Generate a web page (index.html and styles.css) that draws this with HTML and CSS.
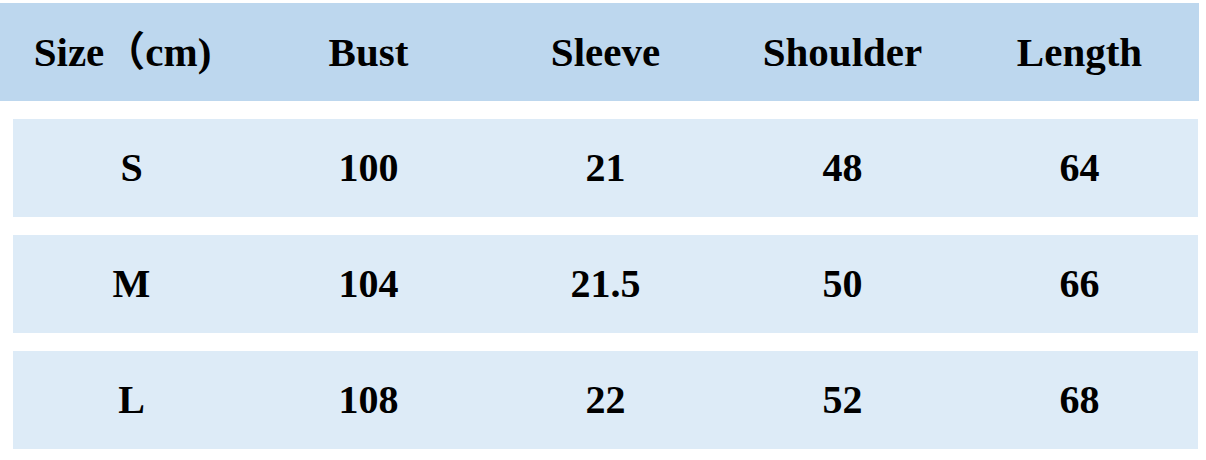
FILE: index.html
```html
<!DOCTYPE html>
<html>
<head>
<meta charset="utf-8">
<link rel="stylesheet" href="styles.css">
</head>
<body>
<div class="chart">
  <div class="head">
    <div class="cell first">Size（cm)</div>
    <div class="cell">Bust</div>
    <div class="cell">Sleeve</div>
    <div class="cell">Shoulder</div>
    <div class="cell">Length</div>
  </div>
  <div class="row">
    <div class="cell">S</div>
    <div class="cell">100</div>
    <div class="cell">21</div>
    <div class="cell">48</div>
    <div class="cell">64</div>
  </div>
  <div class="row">
    <div class="cell">M</div>
    <div class="cell">104</div>
    <div class="cell">21.5</div>
    <div class="cell">50</div>
    <div class="cell">66</div>
  </div>
  <div class="row">
    <div class="cell">L</div>
    <div class="cell">108</div>
    <div class="cell">22</div>
    <div class="cell">52</div>
    <div class="cell">68</div>
  </div>
</div>
</body>
</html>
```
FILE: styles.css
```css
html, body {
  margin: 0;
  padding: 0;
  background: #ffffff;
}
.chart {
  width: 1206px;
  padding-top: 3px;
  display: flex;
  flex-direction: column;
  gap: 18px;
  font-family: "Liberation Serif", "Noto Sans CJK SC", serif;
  font-weight: bold;
  color: #000000;
}
.head, .row {
  display: grid;
  grid-template-columns: repeat(5, 1fr);
  align-items: center;
  height: 98px;
}
.head {
  width: 1199px;
  box-sizing: border-box;
  padding: 0 1px 0 13px;
  background: #bdd7ee;
  font-size: 41px;
}
.row {
  width: 1185px;
  margin-left: 13px;
  background: #ddebf7;
  font-size: 40px;
}
.cell {
  text-align: center;
  line-height: 1;
}
.head .first {
  padding-right: 18px;
}
```
